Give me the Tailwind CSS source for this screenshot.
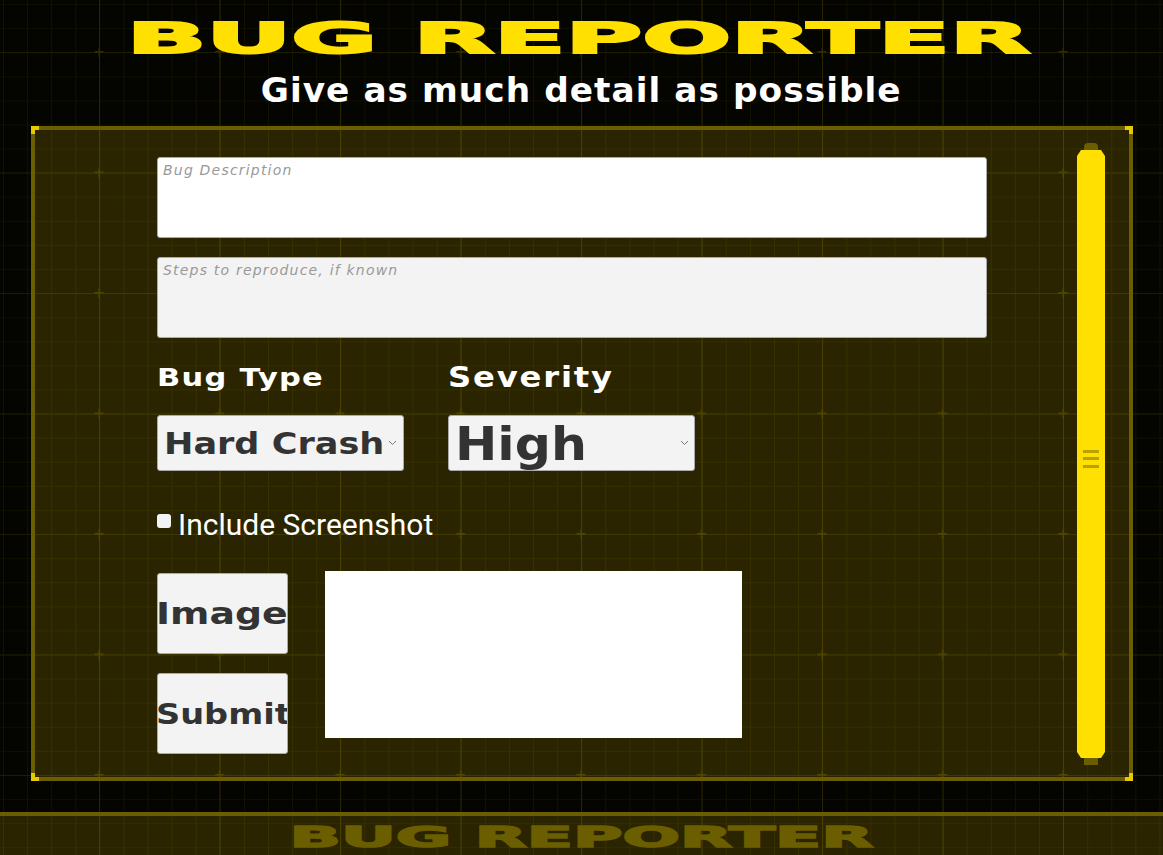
<html lang="en">

<head>
  <meta charset="UTF-8">
  <title>Bug Reporter</title>
  <script src="https://cdn.jsdelivr.net/npm/@tailwindcss/browser@4"></script>
</head>

<body class="bg-[#040400]">
  <div class="relative isolate flex flex-col h-[855px] w-[1163px] overflow-hidden font-['DejaVu_Sans',sans-serif] bg-[image:linear-gradient(to_right,#292400_1px,transparent_1px),linear-gradient(to_bottom,#1f1b00_1px,transparent_1px),linear-gradient(to_right,#141100_1px,transparent_1px),linear-gradient(to_bottom,#110e00_1px,transparent_1px)] bg-[size:120.5px_120.5px,120.5px_120.5px,24.1px_24.1px,24.1px_24.1px] bg-[position:99px_52px,99px_52px,3px_4px,3px_4px]">

    <!-- Crosshair marks on the background grid -->
    <svg class="absolute inset-0 -z-10" width="1163" height="855">
      <defs>
        <pattern id="marks" x="-21.5" y="-68.5" width="120.5" height="120.5" patternUnits="userSpaceOnUse">
          <path d="M116 120h9M120.5 116v9M-4.500 120h9M0 116v9M116 0h9M120.500 -4v9M-4.500 0h9M0 -4v9" stroke="#332c00" stroke-width="1" fill="none" />
        </pattern>
      </defs>
      <rect width="1163" height="855" fill="url(#marks)" />
    </svg>

    <!-- Header -->
    <header class="h-[126px] flex flex-col items-center">
      <h1 class="mt-[12px] mr-[7px] h-[54px] leading-[54px] text-[42px] font-bold text-[#ffe000] scale-x-[2.49] [-webkit-text-stroke:2px_#ffe000]">BUG REPORTER</h1>
      <h2 class="mt-[5px] h-[40px] leading-[40px] text-[33px] font-bold text-white scale-x-[1.04] tracking-[1px]">Give as much detail as possible</h2>
    </header>

    <!-- Form panel -->
    <main class="relative ml-[31px] w-[1102px] h-[655px] border-[4px] border-[#6b5e00] bg-[#ffe000]/[.15] flex">
      <span class="absolute -left-[4px] -top-[4px] w-[8px] h-[8px] border-l-[4px] border-t-[4px] border-[#e6ca00]"></span>
      <span class="absolute -right-[4px] -top-[4px] w-[8px] h-[8px] border-r-[4px] border-t-[4px] border-[#e6ca00]"></span>
      <span class="absolute -left-[4px] -bottom-[4px] w-[8px] h-[8px] border-l-[4px] border-b-[4px] border-[#e6ca00]"></span>
      <span class="absolute -right-[4px] -bottom-[4px] w-[8px] h-[8px] border-r-[4px] border-b-[4px] border-[#e6ca00]"></span>

      <form class="ml-[122px] mt-[27px] w-[830px] flex flex-col">
        <textarea placeholder="Bug Description" class="w-[830px] h-[81px] rounded-[3px] bg-white border border-[#aaa] px-[5px] py-[2px] text-[14px] italic tracking-[1.2px] resize-none placeholder:text-[#999]"></textarea>
        <textarea placeholder="Steps to reproduce, if known" class="mt-[19px] w-[830px] h-[81px] rounded-[3px] bg-[#f3f3f3] border border-[#aaa] px-[5px] py-[2px] text-[14px] italic tracking-[1.2px] resize-none placeholder:text-[#999]"></textarea>

        <div class="mt-[20px] flex gap-[44px]">
          <div class="w-[247px]">
            <label class="block h-[40px] leading-[40px] text-[24px] font-bold text-white tracking-[1px] origin-left scale-x-[1.27] w-[130px] whitespace-nowrap">Bug Type</label>
            <div role="combobox" class="relative mt-[17px] h-[56px] flex items-center rounded-[3px] bg-[#f3f3f3] border border-[#aaa] pl-[6px] text-[30px] font-bold text-[#333] whitespace-nowrap">
              <span class="origin-left scale-x-[1.17]">Hard Crash</span>
              <svg class="absolute right-[6px] top-[24px] w-[9px] h-[6px]" viewBox="0 0 9 6" fill="none" stroke="#777" stroke-width="1"><path d="M1 1l3.5 3.500L8 1" /></svg>
            </div>
          </div>
          <div class="w-[247px]">
            <label class="block h-[40px] leading-[40px] text-[28px] font-bold text-white tracking-[1.6px] origin-left scale-x-[1.15] w-[145px] whitespace-nowrap">Severity</label>
            <div role="combobox" class="relative mt-[17px] h-[56px] flex items-center rounded-[3px] bg-[#f3f3f3] border border-[#aaa] pl-[6px] pt-[2px] text-[46px] leading-[52px] font-bold text-[#333]">
              <span class="origin-left scale-x-[1.1]">High</span>
              <svg class="absolute right-[5px] top-[24px] w-[9px] h-[6px]" viewBox="0 0 9 6" fill="none" stroke="#777" stroke-width="1"><path d="M1 1l3.5 3.500L8 1" /></svg>
            </div>
          </div>
        </div>

        <label class="mt-[33px] flex items-center h-[40px] font-['Roboto',sans-serif] text-[30px] text-white">
          <span class="w-[14px] h-[14px] rounded-[3px] bg-[#f3f3f3] mr-[7px] -mt-[6px]"></span>
          Include Screenshot
        </label>

        <div class="mt-[27px] flex">
          <div class="flex flex-col gap-[19px] pt-[2px] w-[131px]">
            <button type="button" class="flex items-center w-[131px] h-[81px] overflow-hidden rounded-[3px] bg-[#f3f3f3] border border-[#aaa] text-[30px] font-bold text-[#333] whitespace-nowrap">
              <span class="-ml-[2px] origin-left scale-x-[1.26]">Image</span>
            </button>
            <button type="button" class="flex items-center w-[131px] h-[81px] overflow-hidden rounded-[3px] bg-[#f3f3f3] border border-[#aaa] text-[28px] font-bold text-[#333] whitespace-nowrap">
              <span class="-ml-[2px] mt-[2px] origin-left scale-x-[1.2]">Submit</span>
            </button>
          </div>
          <div class="ml-[37px] w-[417px] h-[167px] bg-white"></div>
        </div>
      </form>

      <!-- Scrollbar -->
      <div class="absolute left-[1042px] top-[13px] w-[28px] h-[622px] flex flex-col items-center">
        <span class="w-[14px] h-[7px] rounded-t-[4px] bg-[#6b5e00]"></span>
        <div class="w-[28px] flex-1 pt-[9px] bg-[#ffe000] flex flex-col items-center justify-center gap-[4.500px] [clip-path:polygon(4px_0,24px_0,28px_6px,28px_calc(100%-6px),24px_100%,4px_100%,0_calc(100%-6px),0_6px)]">
          <span class="w-[16px] h-[3px] bg-[#b8a200]"></span>
          <span class="w-[16px] h-[3px] bg-[#b8a200]"></span>
          <span class="w-[16px] h-[3px] bg-[#b8a200]"></span>
        </div>
        <span class="w-[14px] h-[7px] bg-[#6b5e00]"></span>
      </div>
    </main>

    <!-- Footer -->
    <footer class="mt-[31px] h-[43px] border-t-[4px] border-[#6b5e00] bg-[#ffe000]/[.15] flex justify-center">
      <span class="mt-[3px] h-[36px] leading-[36px] text-[29px] font-bold text-[#6b5e00] scale-x-[2.33] [-webkit-text-stroke:1.5px_#6b5e00]">BUG REPORTER</span>
    </footer>
  </div>
</body>

</html>
